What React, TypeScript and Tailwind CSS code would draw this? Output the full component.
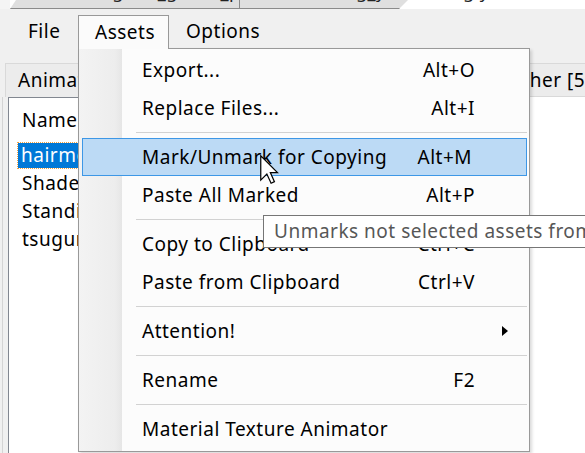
import React from "react";

type Item =
  | { kind: "item"; label: string; shortcut?: string; hot?: boolean; sub?: boolean }
  | { kind: "sep" };

const items: Item[] = [
  { kind: "item", label: "Export...", shortcut: "Alt+O" },
  { kind: "item", label: "Replace Files...", shortcut: "Alt+I" },
  { kind: "sep" },
  { kind: "item", label: "Mark/Unmark for Copying", shortcut: "Alt+M", hot: true },
  { kind: "item", label: "Paste All Marked", shortcut: "Alt+P" },
  { kind: "sep" },
  { kind: "item", label: "Copy to Clipboard", shortcut: "Ctrl+C" },
  { kind: "item", label: "Paste from Clipboard", shortcut: "Ctrl+V" },
  { kind: "sep" },
  { kind: "item", label: "Attention!", sub: true },
  { kind: "sep" },
  { kind: "item", label: "Rename", shortcut: "F2" },
  { kind: "sep" },
  { kind: "item", label: "Material Texture Animator" },
];

function RowContent({ it }: { it: Extract<Item, { kind: "item" }> }) {
  return (
    <>
      <span className="flex-1 whitespace-nowrap">{it.label}</span>
      {it.shortcut && <span className="whitespace-nowrap mr-[54px]">{it.shortcut}</span>}
      {it.sub && (
        <span className="mr-[21px] w-0 h-0 border-y-[5px] border-y-transparent border-l-[6px] border-l-black" />
      )}
    </>
  );
}

function MenuRow({ it }: { it: Extract<Item, { kind: "item" }> }) {
  if (it.hot) {
    return (
      <div className="h-[38px] pl-[3px] pr-[2px]">
        <div className="h-full flex items-center pl-[59px] bg-[#bcdaf5] border border-[#3d97e6]">
          <RowContent it={it} />
        </div>
      </div>
    );
  }
  return (
    <div className="h-[38px] flex items-center pl-[63px]">
      <RowContent it={it} />
    </div>
  );
}

export default function App() {
  return (
    <div className="relative w-[585px] h-[453px] overflow-hidden bg-[#f0f0f0] text-black font-['Noto_Sans',sans-serif] text-[19px] tracking-[0.5px] leading-none">
      {/* top tab strip */}
      <div className="h-[9px] flex bg-white overflow-hidden">
        <div className="w-[10px] shrink-0 bg-[#f4f4f4]" />
        <div className="w-[230px] shrink-0 bg-[#dfdfdf] border-b border-r border-[#8a8a8a] relative overflow-hidden [clip-path:polygon(6px_0,100%_0,100%_100%,0_100%)]">
          <span className="absolute left-[72px] -top-[18px] text-[18px] text-[#222] whitespace-nowrap">Tsugumi_g Hair_py</span>
        </div>
        <div className="w-[168px] shrink-0 bg-[#dfdfdf] border-b border-[#8a8a8a] relative overflow-hidden [clip-path:polygon(0_0,100%_0,calc(100%-9px)_100%,0_100%)]">
          <span className="absolute left-[55px] -top-[18px] text-[18px] text-[#222] whitespace-nowrap">Shading_y</span>
        </div>
        <div className="flex-1 relative">
          <span className="absolute left-[55px] -top-[18px] text-[18px] text-[#222] whitespace-nowrap">g  y</span>
        </div>
      </div>

      {/* menu bar */}
      <div className="h-[39px] flex items-start pl-[11px] pt-[6px]">
        <div className="w-[67px] h-[33px] pl-[17px] flex items-center">File</div>
        <div className="relative z-20 w-[91px] h-[34px] pl-[16px] flex items-center border-l border-t border-r border-[#999999] bg-[#fbfbfb] pb-[1px]">
          Assets
        </div>
        <div className="h-[33px] px-[17px] flex items-center">Options</div>
      </div>

      {/* content */}
      <div className="flex pt-[15px] h-[405px]">
        <div className="w-[300px] shrink-0 flex flex-col pl-[2px]">
          <div className="h-[34px] flex items-center pl-[12px] border-t border-l border-[#d9d9d9] bg-[#ececec] ml-[3px]">
            Animations [4]
          </div>
          <div className="flex-1 border-l border-[#d4d4d4] pl-[5px] bg-[#f0f0f0]">
            <div className="h-full bg-white border-l border-t border-[#828790] pt-[8px] pl-[9px]">
              <div className="h-[28px] flex items-center pl-[4px] mb-[7px]">Name</div>
              <div className="h-[28px] flex items-center">
                <span className="h-[25px] flex items-center px-[3px] bg-[#0078d7] text-white outline-1 outline-dotted outline-[#f0a040]">
                  hairmove
                </span>
              </div>
              <div className="h-[28px] flex items-center pl-[4px]">Shader</div>
              <div className="h-[28px] flex items-center pl-[4px]">Standing</div>
              <div className="h-[28px] flex items-center pl-[4px]">tsugumi</div>
            </div>
          </div>
        </div>
        <div className="flex-1 min-w-0 flex flex-col overflow-hidden">
          <div className="h-[34px] flex items-center pl-[207px] bg-[#ececec] border-t border-b border-[#d9d9d9] whitespace-nowrap">
            Other [57]
          </div>
          <div className="flex-1 bg-white" />
        </div>
      </div>

      {/* dropdown menu */}
      <div className="absolute z-10 left-[78px] top-[48px] w-[452px] h-[404px] border border-[#999999] bg-[linear-gradient(to_right,#f3f3f3_0px,#ededed_36px,#e6e6e6_43px,#fcfcfc_43px)] pt-[2px] shadow-[2px_2px_3px_rgba(0,0,0,0.15)]">
        {items.map((it, i) =>
          it.kind === "sep" ? (
            <div key={i} className="h-[11px] flex items-center pl-[57px] pr-[2px]">
              <div className="h-px w-full bg-[#d2d2d2]" />
            </div>
          ) : (
            <MenuRow key={i} it={it} />
          )
        )}
      </div>

      {/* tooltip */}
      <div className="absolute z-30 left-[263px] top-[215px] h-[33px] w-[360px] bg-white border border-[#767676] flex items-center pl-[10px] text-[#575757] whitespace-nowrap">
        Unmarks not selected assets from the list
      </div>

      {/* mouse cursor */}
      <svg className="absolute z-40 left-[260px] top-[155px]" width="19" height="29" viewBox="0 0 12.5 19">
        <path
          d="M0.5 0.5 L0.5 16.5 L4.5 12.5 L7.3 18.5 L9.5 17.5 L6.8 11.5 L11.5 11.5 Z"
          fill="white"
          stroke="black"
          strokeWidth="0.8"
          strokeLinejoin="miter"
        />
      </svg>
    </div>
  );
}
